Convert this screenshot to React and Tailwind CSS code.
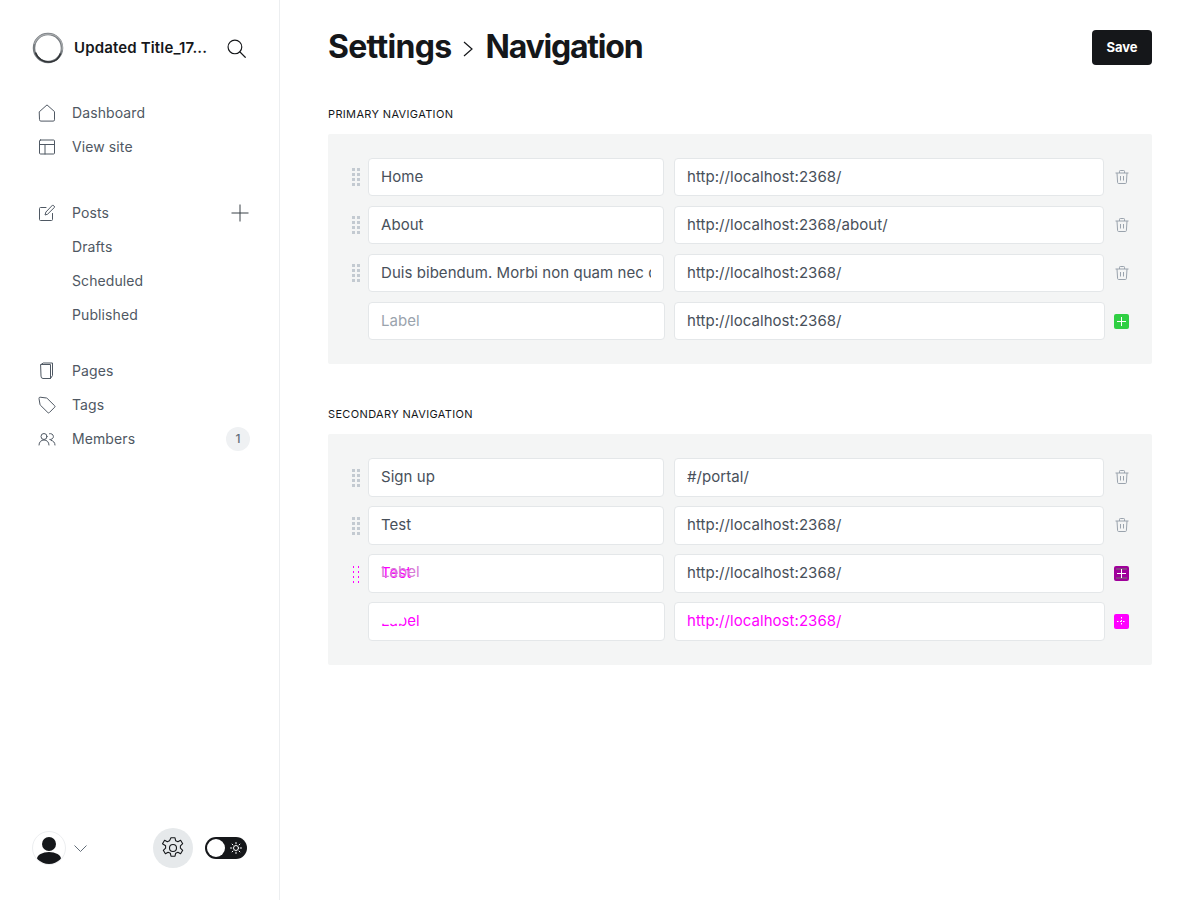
const fontStack = { fontFamily: "Inter, 'Liberation Sans', sans-serif" };

function Icon({ children, className = "w-[18px] h-[18px] text-[#4f5863]", viewBox = "0 0 18 18" }) {
  return (
    <svg viewBox={viewBox} className={className} fill="none" stroke="currentColor" strokeWidth="1" strokeLinecap="round" strokeLinejoin="round">
      {children}
    </svg>
  );
}

const HomeIcon = () => (
  <Icon>
    <path d="M1.500 7.600 9 .9l7.500 6.700v8.200a1.300 1.300 0 0 1-1.300 1.300H2.800a1.300 1.300 0 0 1-1.300-1.300z" />
  </Icon>
);
const SiteIcon = () => (
  <Icon>
    <rect x="1.500" y="2" width="15" height="14" rx="1" />
    <path d="M1.500 6.500h15M7 6.500V16" />
  </Icon>
);
const PostIcon = () => (
  <Icon>
    <path d="M8 3.500H2.500a1 1 0 0 0-1 1v11a1 1 0 0 0 1 1h11a1 1 0 0 0 1-1V9.500" />
    <path d="M15 1.200 16.800 3 9.600 10.200l-2.600.8.8-2.600z" />
  </Icon>
);
const PageIcon = () => (
  <Icon>
    <path d="M3 2.500h9.500v14H5a2 2 0 0 1-2-2z" />
    <path d="M3 2.500 5.200 1h9.300v12.500l-2 3" />
  </Icon>
);
const TagIcon = () => (
  <Icon>
    <path d="M1 2.200A1 1 0 0 1 2.100 1.200L8.500 2a1 1 0 0 1 .6.300l7.600 7.500a1 1 0 0 1 0 1.400l-5.400 5.400a1 1 0 0 1-1.400 0L2.300 9.100a1 1 0 0 1-.3-.6z" />
  </Icon>
);
const MembersIcon = () => (
  <Icon>
    <circle cx="6" cy="6.500" r="3" />
    <path d="M1 15c0-3 2.200-5 5-5s5 2 5 5" />
    <path d="M11.500 3.700a3 3 0 1 1 .3 5.800M13 10.300c2.400.5 4 2.300 4 4.700" />
  </Icon>
);

function NavItem({ icon, label, right, indent }) {
  return (
    <div className="flex items-center h-[34px] pl-[38px] pr-[30px]">
      <span className="w-[34px] shrink-0 flex items-center">{!indent && icon}</span>
      <span className="flex-1 pb-[2px] text-[14px] tracking-[0.1px] text-[#4f5863]">{label}</span>
      {right}
    </div>
  );
}

function Grip({ hot }) {
  const dots = [];
  for (let y = 0; y < 4; y++) {
    for (let x = 0; x < 2; x++) {
      dots.push(
        hot ? (
          <rect key={`${x}-${y}`} x={1 + x * 5} y={y * 5 + 1} width="1" height="2" fill="#ff00ff" />
        ) : (
          <rect key={`${x}-${y}`} x={x * 5} y={y * 5} width="3" height="3" fill="#c3cad1" />
        )
      );
    }
  }
  return (
    <svg viewBox="0 0 8 18" className="w-2 h-[18px]">
      {dots}
    </svg>
  );
}

const TrashIcon = ({ className = "" }) => (
  <svg viewBox="0 0 14 14" className={`w-[14px] h-[14px] text-[#9aa3ad] ${className}`} fill="none" stroke="currentColor" strokeWidth="1">
    <path d="M.5 3h13M4.500 3V1.300a.8.8 0 0 1 .8-.8h3.400a.8.8 0 0 1 .8.8V3M2 3l.6 9.600a1 1 0 0 0 1 .9h6.800a1 1 0 0 0 1-.9L12 3M5.500 6v4.500M8.500 6v4.500" />
  </svg>
);

function AddButton({ color, children }) {
  return (
    <div className={`relative w-[15px] h-[15px] mr-[1px] rounded-[2px] flex items-center justify-center ${color}`}>
      {children}
    </div>
  );
}

const inputBase =
  "bg-white border border-[#e4e7e9] rounded-[4px] pl-3 pr-3 pb-[2px] text-[15px] tracking-[0.05px] text-[#48505a] placeholder:text-[#9aa3ad] outline-none";

function Row({ label, url, placeholder, action, grip, last, tall, labelClass = "", urlClass = "", overlay }) {
  const height = tall ? "h-[39px]" : "h-[38px]";
  return (
    <div className={`flex items-center last:mb-0 ${tall ? "h-[39px] mb-[9px]" : "h-[38px] mb-[10px]"}`}>
      <div className="w-10 shrink-0 flex justify-center pl-[16px]">{grip}</div>
      <div className={`relative ${last ? "w-[297px]" : "w-[296px]"} shrink-0`}>
        <input readOnly value={label} placeholder={placeholder} className={`${inputBase} ${height} w-full ${labelClass}`} />
        {overlay}
      </div>
      <input readOnly value={url} className={`${inputBase} ${height} ${last ? "ml-[9px] w-[431px]" : "ml-[10px] w-[430px]"} shrink-0 ${urlClass}`} />
      <div className={`flex-1 flex justify-center ${last ? "pr-[1px]" : ""}`}>{action}</div>
    </div>
  );
}

function Panel({ title, children, className = "" }) {
  return (
    <section className={className}>
      <h3 className="text-[11px] leading-4 font-normal uppercase tracking-[0.35px] text-[#15171a] mb-3">{title}</h3>
      <div className="bg-[#f4f5f5] rounded-[2px] pt-6 pb-6 pr-[12px]">{children}</div>
    </section>
  );
}

export default function App() {
  return (
    <div className="flex h-screen bg-white" style={fontStack}>
      <aside className="w-[280px] shrink-0 border-r border-[#eceef0] flex flex-col justify-between">
        <div>
          <div className="flex items-center h-[34px] mt-[31px] pl-[32px] pr-[32px]">
            <svg viewBox="0 0 32 32" className="w-[32px] h-[32px] shrink-0">
              <circle cx="16" cy="16" r="14" fill="none" stroke="#777c80" strokeWidth="2.500" />
              <path d="M2.500 12C5 3.500 14 .5 22 3c6.500 2.500 9.500 9 8 15.500" fill="none" stroke="#a8abad" strokeWidth="1.200" />
              <path d="M3.500 20.500c2 6.500 8.500 10 14.500 9.500 4.500-.5 9-3.500 10.500-8.500" fill="none" stroke="#303336" strokeWidth="1.500" />
            </svg>
            <span className="ml-[10px] w-[136px] whitespace-nowrap text-[15px] tracking-[0.15px] font-semibold text-[#15171a]">Updated Title_17...</span>
            <svg viewBox="0 0 18 18" className="w-[19px] h-[19px] ml-[17px] shrink-0 text-[#15171a]" fill="none" stroke="currentColor" strokeWidth="1.100" strokeLinecap="round">
              <circle cx="7.500" cy="7.500" r="6.500" />
              <path d="m12.300 12.300 5 5" />
            </svg>
          </div>

          <nav className="mt-[31px]">
            <NavItem icon={<HomeIcon />} label="Dashboard" />
            <NavItem icon={<SiteIcon />} label="View site" />
            <div className="mt-[32px]">
              <NavItem
                icon={<PostIcon />}
                label="Posts"
                right={
                  <svg viewBox="0 0 18 18" className="w-[18px] h-[18px] text-[#394047]" fill="none" stroke="currentColor" strokeWidth="1">
                    <path d="M9 .5v17M.5 9h17" />
                  </svg>
                }
              />
              <NavItem indent label="Drafts" />
              <NavItem indent label="Scheduled" />
              <NavItem indent label="Published" />
            </div>
            <div className="mt-[22px]">
              <NavItem icon={<PageIcon />} label="Pages" />
              <NavItem icon={<TagIcon />} label="Tags" />
              <NavItem
                icon={<MembersIcon />}
                label="Members"
                right={
                  <span className="w-[24px] h-[24px] -mr-[1px] rounded-full bg-[#eff1f3] text-[12px] font-medium text-[#626d79] flex items-center justify-center">
                    1
                  </span>
                }
              />
            </div>
          </nav>
        </div>

        <div className="flex items-center pl-[32px] pb-[32px]">
          <div className="w-[34px] h-[34px] rounded-full border border-[#eceef0] overflow-hidden relative bg-white">
            <div className="absolute left-[9px] top-[5px] w-[14px] h-[14px] rounded-full bg-[#15171a]" />
            <div className="absolute left-[4px] top-[20px] w-[24px] h-[14px] rounded-[50%] bg-[#15171a]" />
          </div>
          <svg viewBox="0 0 13 7" className="w-[13px] h-[7px] ml-[8px] text-[#626d79]" fill="none" stroke="currentColor" strokeWidth="1">
            <path d="m.5.500 6 6 6-6" />
          </svg>
          <div className="w-10 h-10 rounded-full bg-[#e6e9eb] ml-[66px] flex items-center justify-center">
            <svg viewBox="0 0 24 24" className="w-[24px] h-[24px] text-[#15171a]" fill="none" stroke="currentColor" strokeWidth="1.100" strokeLinejoin="round">
              <path d="M10 1.800h4l.7 3 2.200 1 2.700-1.500 2.100 3.400-2.300 2.100v2.400l2.300 2.100-2.100 3.400-2.700-1.500-2.200 1-.7 3h-4l-.7-3-2.200-1-2.700 1.500-2.100-3.400 2.300-2.100v-2.400L1.500 7.700l2.100-3.400 2.700 1.500 2.200-1z" />
              <circle cx="12" cy="12" r="3.500" />
            </svg>
          </div>
          <div className="relative w-[42px] h-[22px] rounded-full bg-[#15171a] ml-[12px]">
            <div className="absolute left-[2px] top-[2px] w-[18px] h-[18px] rounded-full bg-white" />
            <svg viewBox="0 0 12 12" className="absolute right-[5px] top-[5px] w-3 h-3 text-white" fill="none" stroke="currentColor" strokeWidth="1" strokeLinecap="round">
              <circle cx="6" cy="6" r="2.500" />
              <path d="M6 .5v1.300M6 10.200v1.300M.5 6h1.300M10.200 6h1.300M2.100 2.100l.9.900M9 9l.9.900M2.100 9.900 3 9M9 3l.9-.900" />
            </svg>
          </div>
        </div>
      </aside>

      <main className="flex-1 px-[48px]">
        <header className="flex items-start justify-between pt-[30px] h-[100px]">
          <h1 className="flex items-center text-[32px] leading-[34px] font-bold tracking-[-0.7px] text-[#15171a]">
            <span>Settings</span>
            <svg viewBox="0 0 10 16" className="w-[10px] h-[16px] mx-[12px] mt-[4px] text-[#15171a]" fill="none" stroke="currentColor" strokeWidth="1.200">
              <path d="m1 1 8 7-8 7" />
            </svg>
            <span className="tracking-[-1.2px]">Navigation</span>
          </h1>
          <button className="w-[60px] h-[35px] rounded-[4px] bg-[#15171a] text-white text-[13px] font-bold">Save</button>
        </header>

        <Panel title="Primary navigation" className="mt-[6px]">
          <Row grip={<Grip />} label="Home" url="http://localhost:2368/" action={<TrashIcon />} />
          <Row grip={<Grip />} label="About" url="http://localhost:2368/about/" action={<TrashIcon />} />
          <Row grip={<Grip />} label="Duis bibendum. Morbi non quam nec dui luctus rutrum." url="http://localhost:2368/" action={<TrashIcon />} />
          <Row
            last
            label=""
            placeholder="Label"
            url="http://localhost:2368/"
            action={
              <AddButton color="bg-[#30cf43]">
                <svg viewBox="0 0 9 9" className="w-[9px] h-[9px] text-white" fill="none" stroke="currentColor" strokeWidth="1">
                  <path d="M4.500 0v9M0 4.500h9" />
                </svg>
              </AddButton>
            }
          />
        </Panel>

        <Panel title="Secondary navigation" className="mt-[42px]">
          <Row tall grip={<Grip />} label="Sign up" url="#/portal/" action={<TrashIcon className="-translate-y-px" />} />
          <Row tall grip={<Grip />} label="Test" url="http://localhost:2368/" action={<TrashIcon className="-translate-y-px" />} />
          <Row
            tall
            grip={<Grip hot />}
            label="Test"
            labelClass="!text-[#ff00ff]"
            url="http://localhost:2368/"
            overlay={
              <span className="absolute left-[13px] top-[7px] text-[15px] tracking-[0.05px] leading-[22px] text-[#d77ad7] pointer-events-none">Label</span>
            }
            action={
              <AddButton color="bg-[#a0009b]">
                <svg viewBox="0 0 15 15" className="w-[15px] h-[15px]" fill="none" strokeWidth="1">
                  <path d="M2 3h11M2 12h11" stroke="#6f7f6f" />
                  <path d="M7.500 3v9M3 7.500h9" stroke="#ffffff" />
                </svg>
              </AddButton>
            }
          />
          <Row
            tall
            last
            label=""
            url="http://localhost:2368/"
            urlClass="!text-[#ff00ff]"
            overlay={
              <span className="absolute left-[13px] top-[8px] text-[15px] tracking-[0.05px] leading-[22px] text-[#ff00ff] pointer-events-none [clip-path:polygon(0_62%,60%_62%,60%_0,100%_0,100%_100%,0_100%)]">Label</span>
            }
            action={
              <AddButton color="bg-[#ff00ff]">
                <svg viewBox="0 0 9 9" className="w-[9px] h-[9px] text-white" fill="none" stroke="currentColor" strokeWidth="1" strokeDasharray="1.500 1.500">
                  <path d="M4.500 0v9M0 4.500h9" />
                </svg>
              </AddButton>
            }
          />
        </Panel>
      </main>
    </div>
  );
}
